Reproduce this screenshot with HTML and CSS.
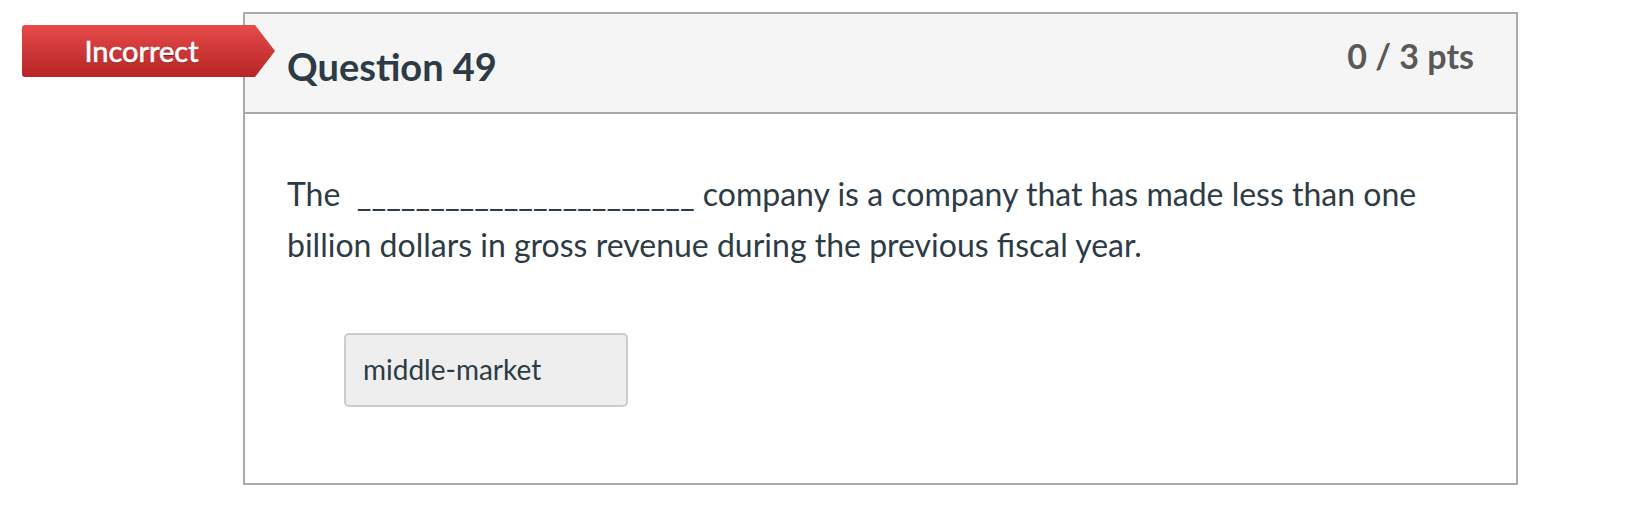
FILE: index.html
```html
<!DOCTYPE html>
<html lang="en">
<head>
<meta charset="utf-8">
<title>Question 49</title>
<link rel="stylesheet" href="styles.css">
</head>
<body>
<div class="page">
  <div class="badge"><span class="badge-text">Incorrect</span></div>
  <div class="card">
    <div class="card-header">
      <h2 class="q-title">Question 49</h2>
      <div class="q-points">0 / 3 pts</div>
    </div>
    <div class="card-body">
      <p class="q-text">The &nbsp;_______________________ company is a company that has made less than one billion dollars in gross revenue during the previous fiscal year.</p>
      <div class="answers">
        <div class="answer">middle-market</div>
      </div>
    </div>
  </div>
</div>
</body>
</html>
```
FILE: styles.css
```css
html, body {
  margin: 0;
  padding: 0;
  background: #ffffff;
}
body {
  font-family: Lato, "Noto Sans", sans-serif;
  color: #2d3b45;
}
.page {
  position: relative;
  padding: 12px 0 0 243px;
  width: 1275px;
}
.badge {
  position: absolute;
  left: 22px;
  top: 25px;
  width: 253px;
  height: 52px;
  background: linear-gradient(#e64b4b, #b72424);
  clip-path: polygon(0 0, 233px 0, 253px 26px, 233px 52px, 0 52px);
  border-radius: 3px;
  display: flex;
  align-items: center;
}
.badge-text {
  width: 233px;
  text-align: center;
  color: #ffffff;
  font-size: 29px;
  line-height: 1;
  margin-top: -1px;
  padding-left: 6px;
  box-sizing: border-box;
  -webkit-text-stroke: 0.6px #ffffff;
  text-shadow: 0 1px 1px rgba(0, 0, 0, 0.45);
}
.card {
  border: 2px solid #aaaaaa;
  box-sizing: border-box;
  width: 1275px;
  height: 473px;
}
.card-header {
  background: #f5f5f5;
  border-bottom: 2px solid #aaaaaa;
  height: 98px;
  display: flex;
  justify-content: space-between;
  align-items: flex-start;
  padding: 0 42px 0 42px;
}
.q-title {
  margin: 30px 0 0 0;
  font-size: 38px;
  line-height: 44px;
  font-weight: 700;
  color: #2d3b45;
}
.q-points {
  margin-top: 22px;
  font-size: 34px;
  line-height: 40px;
  font-weight: 700;
  color: #595959;
}
.card-body {
  padding: 54px 42px 0 42px;
}
.q-text {
  margin: 0;
  font-size: 32px;
  line-height: 51px;
  max-width: 1180px;
}
.answers {
  padding: 63px 0 0 57px;
}
.answer {
  width: 284px;
  height: 74px;
  box-sizing: border-box;
  background: #eeeeee;
  border: 2px solid #cccccc;
  border-radius: 5px;
  font-size: 28px;
  line-height: 68px;
  padding-left: 17px;
  color: #2d3b45;
}
```
